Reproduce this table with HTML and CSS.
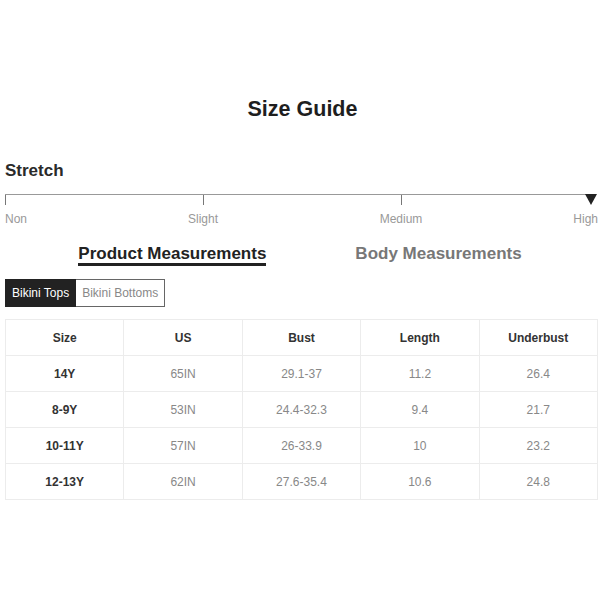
FILE: index.html
```html
<!DOCTYPE html>
<html>
<head>
<meta charset="utf-8">
<link rel="stylesheet" href="styles.css">
</head>
<body>
<div class="page">
  <h1 class="title">Size Guide</h1>
  <h2 class="stretch-title">Stretch</h2>
  <div class="scale">
    <div class="seg tick"></div>
    <div class="seg tick"></div>
    <div class="seg tick last"></div>
  </div>
  <div class="scale-labels">
    <span class="lbl lbl-non">Non</span>
    <span class="lbl lbl-mid lbl-c2">Slight</span>
    <span class="lbl lbl-mid lbl-c3">Medium</span>
    <span class="lbl lbl-high">High</span>
  </div>
  <div class="tabs">
    <div class="tab active">Product Measurements</div>
    <div class="tab">Body Measurements</div>
  </div>
  <div class="subtabs">
    <div class="subtab on">Bikini Tops</div>
    <div class="subtab">Bikini Bottoms</div>
  </div>
  <table class="sizes">
    <thead>
      <tr><th>Size</th><th>US</th><th>Bust</th><th>Length</th><th>Underbust</th></tr>
    </thead>
    <tbody>
      <tr><td class="sz">14Y</td><td>65IN</td><td>29.1-37</td><td>11.2</td><td>26.4</td></tr>
      <tr><td class="sz">8-9Y</td><td>53IN</td><td>24.4-32.3</td><td>9.4</td><td>21.7</td></tr>
      <tr><td class="sz">10-11Y</td><td>57IN</td><td>26-33.9</td><td>10</td><td>23.2</td></tr>
      <tr><td class="sz">12-13Y</td><td>62IN</td><td>27.6-35.4</td><td>10.6</td><td>24.8</td></tr>
    </tbody>
  </table>
</div>
</body>
</html>
```
FILE: styles.css
```css
html, body {
  margin: 0;
  padding: 0;
  background: #fff;
}
body {
  font-family: "Liberation Sans", Arial, sans-serif;
  color: #333;
}
.page {
  padding: 96px 2px 0 5px;
}
.title {
  margin: 0;
  text-align: center;
  font-size: 21.5px;
  line-height: 26px;
  font-weight: bold;
  color: #1e1e1e;
  padding-left: 2px;
}
.stretch-title {
  margin: 39px 0 0;
  font-size: 17px;
  line-height: 20px;
  font-weight: bold;
  color: #2a2a2a;
}
.scale {
  margin-top: 13px;
  width: 589px;
  display: grid;
  grid-template-columns: 198px 198px 1fr;
  border-top: 1px solid #999;
  height: 5px;
}
.tick {
  border-left: 1px solid #777;
}
.tick.last {
  display: flex;
  justify-content: flex-end;
}
.tick.last::after {
  content: "";
  width: 0;
  height: 0;
  margin-top: -1px;
  margin-right: -3px;
  border-left: 6px solid transparent;
  border-right: 6px solid transparent;
  border-top: 11px solid #222;
}
.scale-labels {
  margin-top: 12px;
  display: grid;
  grid-template-columns: 198px 198px 1fr;
  font-size: 12px;
  line-height: 14px;
  color: #999;
}
.lbl { grid-row: 1; }
.lbl-non { grid-column: 1; }
.lbl-mid { justify-self: start; transform: translateX(-50%); }
.lbl-c2 { grid-column: 2; }
.lbl-c3 { grid-column: 3; }
.lbl-high { grid-column: 3; justify-self: end; }
.tabs {
  margin-top: 18px;
  display: flex;
  justify-content: center;
  gap: 89px;
  padding-right: 3px;
}
.tab {
  font-size: 17px;
  line-height: 19px;
  font-weight: bold;
  color: #777;
  padding-bottom: 0;
  border-bottom: 3px solid transparent;
}
.tab.active {
  color: #222;
  border-bottom-color: #222;
}
.subtabs {
  margin-top: 13px;
  display: flex;
}
.subtab {
  font-size: 12px;
  line-height: 14px;
  padding: 6px 6px;
  border: 1px solid #666;
  color: #888;
  background: #fff;
}
.subtab.on {
  background: #222;
  border-color: #222;
  color: #fff;
}
.subtab + .subtab {
  border-left: none;
}
.sizes {
  margin-top: 12px;
  width: 593px;
  border-collapse: collapse;
  table-layout: fixed;
  font-size: 12px;
}
.sizes th, .sizes td {
  border: 1px solid #ececec;
  height: 35px;
  padding: 0;
  text-align: center;
  vertical-align: middle;
}
.sizes th {
  font-weight: bold;
  color: #333;
}
.sizes td {
  color: #888;
}
.sizes td.sz {
  font-weight: bold;
  color: #333;
}
```
